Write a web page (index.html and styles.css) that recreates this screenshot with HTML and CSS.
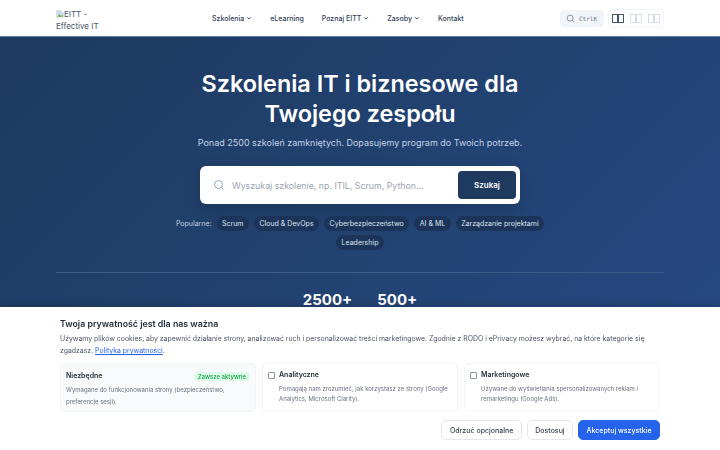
FILE: index.html
```html
<!DOCTYPE html>
<html lang="pl">
<head>
    <meta charset="UTF-8">
    <meta name="viewport" content="width=device-width, initial-scale=1.0">
    <title>EITT - Effective IT Training</title>
    <link rel="stylesheet" href="styles.css">
</head>
<body>

<header class="navbar">
    <a href="#" class="logo">
        <svg class="broken-img" viewBox="0 0 16 16">
            <path d="M1.5 1.5h9l4 4v9h-13z" fill="#fff" stroke="#a9a9a9"/>
            <path d="M2.5 2.5h8v3h3v4l-11 3z" fill="#c5d8f5"/>
            <path d="M2.5 13.5l4-5 3 3 4-2v4z" fill="#6aa84f"/>
        </svg>EITT - Effective IT Training
    </a>
    <nav class="nav-links">
        <a href="#">Szkolenia <svg class="chevron" viewBox="0 0 8 8"><path d="M1.5 3l2.5 2.5L6.5 3"/></svg></a>
        <a href="#">eLearning</a>
        <a href="#">Poznaj EITT <svg class="chevron" viewBox="0 0 8 8"><path d="M1.5 3l2.5 2.5L6.5 3"/></svg></a>
        <a href="#">Zasoby <svg class="chevron" viewBox="0 0 8 8"><path d="M1.5 3l2.5 2.5L6.5 3"/></svg></a>
        <a href="#">Kontakt</a>
    </nav>
    <div class="nav-tools">
        <button class="cmd-search">
            <svg width="9" height="9" viewBox="0 0 24 24" fill="none" stroke="#64748b" stroke-width="2"><circle cx="11" cy="11" r="8"/><path d="M21 21l-4.3-4.3"/></svg>
            <span>CtrlK</span>
        </button>
        <div class="lang-switch">
            <span class="lang active"><i></i><i></i></span>
            <span class="lang"><i></i><i></i></span>
            <span class="lang"><i></i><i></i></span>
        </div>
    </div>
</header>

<section class="hero">
    <h1>Szkolenia IT i biznesowe dla<br>Twojego zespołu</h1>
    <p class="lead">Ponad 2500 szkoleń zamkniętych. Dopasujemy program do Twoich potrzeb.</p>
    <form class="search-box">
        <svg width="12" height="12" viewBox="0 0 24 24" fill="none" stroke="#94a3b8" stroke-width="2"><circle cx="11" cy="11" r="8"/><path d="M21 21l-4.3-4.3"/></svg>
        <span class="placeholder">Wyszukaj szkolenie, np. ITIL, Scrum, Python...</span>
        <button type="button" class="search-btn">Szukaj</button>
    </form>
    <div class="popular">
        <span class="popular-label">Popularne:</span>
        <a href="#" class="tag">Scrum</a>
        <a href="#" class="tag">Cloud &amp; DevOps</a>
        <a href="#" class="tag">Cyberbezpieczeństwo</a>
        <a href="#" class="tag">AI &amp; ML</a>
        <a href="#" class="tag">Zarządzanie projektami</a>
        <a href="#" class="tag">Leadership</a>
    </div>
    <div class="stats">
        <strong>2500+</strong>
        <strong>500+</strong>
    </div>
</section>

<aside class="cookie-banner">
    <h2>Twoja prywatność jest dla nas ważna</h2>
    <p class="cookie-text">Używamy plików cookies, aby zapewnić działanie strony, analizować ruch i personalizować treści marketingowe. Zgodnie z RODO i ePrivacy możesz wybrać, na które kategorie się zgadzasz. <a href="#">Polityka prywatności</a>.</p>
    <div class="cookie-options">
        <div class="option option-required">
            <div class="option-head">
                <b>Niezbędne</b>
                <span class="always">Zawsze aktywne</span>
            </div>
            <p>Wymagane do funkcjonowania strony (bezpieczeństwo, preferencje sesji).</p>
        </div>
        <label class="option">
            <input type="checkbox">
            <div>
                <b>Analityczne</b>
                <p>Pomagają nam zrozumieć, jak korzystasz ze strony (Google Analytics, Microsoft Clarity).</p>
            </div>
        </label>
        <label class="option">
            <input type="checkbox">
            <div>
                <b>Marketingowe</b>
                <p>Używane do wyświetlania spersonalizowanych reklam i remarketingu (Google Ads).</p>
            </div>
        </label>
    </div>
    <div class="cookie-actions">
        <button class="btn">Odrzuć opcjonalne</button>
        <button class="btn">Dostosuj</button>
        <button class="btn btn-primary">Akceptuj wszystkie</button>
    </div>
</aside>

</body>
</html>
```

FILE: styles.css
```css
* {
    box-sizing: border-box;
}
html, body {
    height: 100%;
}
body {
    margin: 0;
    overflow: hidden;
    font-family: Inter, "Liberation Sans", sans-serif;
    background-color: #1e3a5f;
}
a {
    text-decoration: none;
}

/* top bar */
.navbar {
    display: flex;
    align-items: center;
    height: 37px;
    padding: 0 56px;
    background-color: #fff;
    border-bottom: 1px solid #5b7fa8;
}
.logo {
    width: 48px;
    height: 21px;
    overflow: hidden;
    font-size: 8px;
    line-height: 12px;
    color: #475569;
}
.broken-img {
    display: inline-block;
    vertical-align: -1px;
    width: 8px;
    height: 8px;
}
.nav-links {
    display: flex;
    align-items: center;
    gap: 18px;
    margin-left: 108px;
}
.nav-links a {
    display: flex;
    align-items: center;
    gap: 2px;
    font-size: 7px;
    font-weight: 500;
    color: #334155;
}
.chevron {
    width: 6px;
    height: 6px;
    fill: none;
    stroke: #334155;
    stroke-width: 1.2;
}
.nav-tools {
    display: flex;
    align-items: center;
    gap: 4px;
    margin-left: auto;
}
.cmd-search {
    display: flex;
    align-items: center;
    gap: 4px;
    height: 17px;
    width: 44px;
    padding: 0 6px;
    border: none;
    border-radius: 4px;
    background-color: #f1f5f9;
    white-space: nowrap;
    font-family: "DejaVu Sans Mono", monospace;
    font-size: 6px;
    color: #64748b;
}
.lang-switch {
    display: flex;
    gap: 6px;
    height: 19px;
    padding: 0 3px;
    border: 1px solid #f1f5f9;
    border-radius: 4px;
}
.lang {
    display: flex;
    align-items: center;
}
.lang i {
    display: block;
    width: 6px;
    height: 9px;
    border: 1px solid #d5dce6;
}
.lang.active i {
    border-color: #475569;
}

/* hero */
.hero {
    height: 413px;
    padding-top: 32px;
    text-align: center;
    color: #fff;
    background: linear-gradient(135deg, #1e3a5f 0%, #264a85 100%);
}
.hero h1 {
    margin: 0;
    font-size: 23.4px;
    line-height: 30px;
    font-weight: 600;
}
.lead {
    margin: 6px 0 0;
    font-size: 9px;
    line-height: 16px;
    color: #c3d3e8;
}
.search-box {
    display: flex;
    align-items: center;
    width: 320px;
    height: 38px;
    margin: 15px auto 0;
    padding: 0 4px 0 13px;
    border-radius: 6px;
    background-color: #fff;
    box-shadow: 0 6px 18px rgba(0, 0, 0, 0.15);
}
.placeholder {
    margin-left: 7px;
    font-size: 8.8px;
    color: #9ca3af;
}
.search-btn {
    width: 58px;
    height: 28px;
    margin-left: auto;
    border: none;
    border-radius: 4px;
    background-color: #1e3a5f;
    font-family: inherit;
    font-size: 8px;
    font-weight: 600;
    color: #fff;
}
.popular {
    display: flex;
    flex-wrap: wrap;
    align-items: center;
    justify-content: center;
    gap: 4px 5px;
    width: 380px;
    margin: 12px auto 0;
}
.popular-label {
    font-size: 7px;
    color: #c3cfdf;
}
.tag {
    padding: 3px 5.5px;
    height: 15px;
    line-height: 9px;
    border-radius: 8px;
    background-color: #1c3459;
    font-size: 7px;
    color: #dbe4f0;
}
.stats {
    display: flex;
    justify-content: center;
    gap: 25px;
    margin: 22px 56px 0;
    padding-top: 18px;
    border-top: 1px solid #3e5c8a;
    font-size: 15px;
    line-height: 18px;
}
.stats strong {
    font-weight: 700;
}

/* cookie consent */
.cookie-banner {
    position: fixed;
    left: 0;
    right: 0;
    bottom: 0;
    height: 143px;
    padding: 11px 60px 0;
    background-color: #fff;
    box-shadow: 0 -2px 8px rgba(0, 0, 0, 0.15);
}
.cookie-banner h2 {
    margin: 0;
    font-size: 8.8px;
    line-height: 12px;
    font-weight: 600;
    color: #1f2937;
}
.cookie-text {
    margin: 3px 0 0;
    font-size: 6.9px;
    line-height: 12px;
    color: #4b5563;
}
.cookie-text a {
    color: #2563eb;
    text-decoration: underline;
}
.cookie-options {
    display: grid;
    grid-template-columns: repeat(3, 1fr);
    gap: 6px;
    margin-top: 6px;
}
.option {
    display: flex;
    gap: 4px;
    height: 49px;
    padding: 6px 5px;
    border: 1px solid #f1f5f9;
    border-radius: 5px;
    font-size: 7px;
    color: #1f2937;
}
.option-required {
    display: block;
    padding-top: 7px;
    background-color: #f8fafc;
}
.option-head {
    display: flex;
    justify-content: space-between;
    align-items: center;
    height: 10px;
}
.option b {
    font-weight: 600;
    line-height: 10px;
}
.option p {
    margin: 4px 0 0;
    font-size: 6px;
    line-height: 10px;
    color: #6b7280;
}
.option-required p {
    margin-top: 3px;
    line-height: 12px;
}
.option input {
    appearance: none;
    flex-shrink: 0;
    width: 7px;
    height: 7px;
    margin: 2px 0 0;
    border: 1px solid #8a93a0;
    border-radius: 1px;
    background-color: #fff;
}
.always {
    padding: 1px 4px;
    border-radius: 4px;
    background-color: #dcfce7;
    font-size: 6px;
    font-weight: 500;
    color: #16a34a;
}
.cookie-actions {
    display: flex;
    justify-content: flex-end;
    gap: 5px;
    margin-top: 8px;
}
.btn {
    height: 20px;
    padding: 0 7.5px;
    border: 1px solid #e5e7eb;
    border-radius: 5px;
    background-color: #fff;
    font-family: inherit;
    font-size: 7px;
    font-weight: 500;
    color: #374151;
}
.btn-primary {
    border-color: #2563eb;
    background-color: #2563eb;
    color: #fff;
}
```
